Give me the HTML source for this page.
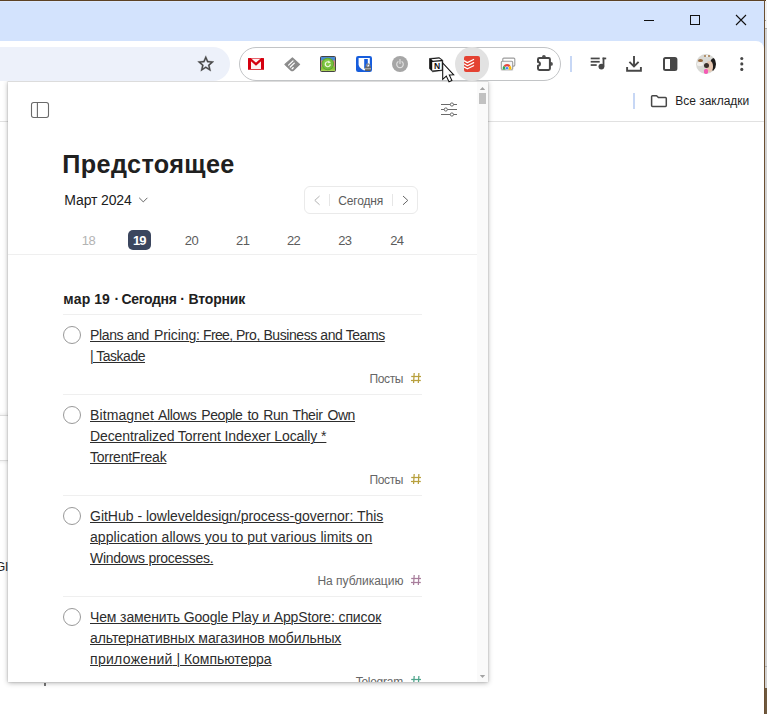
<!DOCTYPE html>
<html lang="ru">
<head>
<meta charset="utf-8">
<title>Предстоящее</title>
<style>
html,body{margin:0;padding:0;}
body{width:767px;height:714px;position:relative;overflow:hidden;background:#fff;font-family:"Liberation Sans",sans-serif;color:#202020;}
.abs{position:absolute;}
.t{position:absolute;white-space:nowrap;line-height:1;}
.u{text-decoration:underline;text-decoration-thickness:1px;text-underline-offset:1px;}
#popup{left:8px;top:81px;width:480px;height:601px;background:#fff;overflow:hidden;}
#shclip{left:0;top:81px;width:764px;height:633px;overflow:hidden;}
#popshadow{left:8px;top:0;width:480px;height:601px;box-shadow:0 1px 5px 0 rgba(0,0,0,.30),0 0 1.5px 0 rgba(0,0,0,.2);}
</style>
</head>
<body>
<div class="abs" style="left:0px;top:0px;width:765px;height:60px;background:#d3e3fd;"></div>
<div class="abs" style="left:0px;top:1px;width:765px;height:1px;background:#dde9fd;"></div>
<div class="abs" style="left:0px;top:41px;width:764px;height:40px;background:#fff;border-top-right-radius:8px;"></div>
<div class="abs" style="left:0px;top:121px;width:764px;height:1px;background:#e1e1e1;"></div>
<div class="abs" style="left:-40px;top:47px;width:270px;height:34px;background:#edf1fa;border-radius:17px;"></div>
<svg class="abs" style="left:196.1px;top:54.2px" width="19.6" height="19.6" viewBox="0 0 24 24"><path fill="#474747" stroke="#474747" stroke-width="0.35" d="M22 9.24l-7.19-.62L12 2 9.19 8.63 2 9.24l5.46 4.73L5.82 21 12 17.27 18.18 21l-1.63-7.03L22 9.24zM12 15.4l-3.76 2.27 1-4.28-3.32-2.88 4.38-.38L12 6.1l1.71 4.04 4.38.38-3.32 2.88 1 4.28L12 15.4z"/></svg>
<div class="abs" style="left:239px;top:47px;width:322px;height:34px;box-sizing:border-box;border:1px solid #c2c4c6;border-radius:17px;"></div>
<div class="abs" style="left:455px;top:47px;width:34px;height:34px;border-radius:50%;background:#e2e2e2;"></div>
<svg class="abs" style="left:248px;top:57.5px" width="16" height="12" viewBox="0 0 16 12"><rect x="0" y="0" width="16" height="12" fill="#fdf1f1"/>
<rect x="0" y="0" width="3" height="12" fill="#d5000f"/><rect x="13" y="0" width="3" height="12" fill="#d5000f"/>
<rect x="0" y="0" width="16" height="0.7" fill="#dd2a35"/>
<polyline points="1.4,0.4 8,6.2 14.6,0.4" fill="none" stroke="#d5000f" stroke-width="2.3" stroke-linejoin="miter"/>
<rect x="0" y="11" width="16" height="1" fill="#de3a44"/></svg>
<svg class="abs" style="left:283.5px;top:56.5px" width="17" height="15" viewBox="0 0 17 15"><path d="M8.4 0.9 L15.6 7.4 L9.4 13.2 Q8.2 14 7 13.2 L0.9 7.4 Z" fill="#8b8b8b" stroke="#8b8b8b" stroke-width="1.2" stroke-linejoin="round"/>
<g stroke="#fff" stroke-width="1.3" stroke-linecap="round"><line x1="4.6" y1="8.1" x2="9" y2="3.9"/><line x1="6.3" y1="10" x2="10.3" y2="6.1"/><line x1="8.1" y1="11.8" x2="9.2" y2="10.7"/></g></svg>
<svg class="abs" style="left:320px;top:56px" width="16" height="16" viewBox="0 0 16 16"><rect x="0.5" y="0.5" width="15" height="15" rx="1" fill="#d48a8a" stroke="#444" stroke-width="1"/>
<rect x="1" y="1" width="14" height="3.4" fill="#4a8bd3"/>
<rect x="1" y="10.6" width="14" height="4.4" fill="#8cc43a"/>
<rect x="1" y="13.6" width="14" height="1.4" fill="#a9d356"/>
<circle cx="7.8" cy="8" r="6.2" fill="#5da42d"/><circle cx="7.7" cy="7.9" r="5.5" fill="#74bd3c"/><circle cx="7.4" cy="7.4" r="3.8" fill="#86ca48"/>
<path d="M10.3 8.4 A2.5 2.5 0 1 1 8.4 5.8" fill="none" stroke="#f2fae8" stroke-width="1.15"/>
<path d="M8.3 4.5 L10.8 6.6 L8.1 7.3 Z" fill="#f2fae8"/></svg>
<svg class="abs" style="left:356px;top:56px" width="16" height="16" viewBox="0 0 16 16"><rect x="0" y="0" width="16" height="16" rx="2.2" fill="#175ddc"/>
<path d="M2.6 2 H13.8 V8.2 C13.8 11.2 10.8 13.4 8.2 14.5 C5.6 13.4 2.6 11.2 2.6 8.2 Z" fill="#fff"/>
<path d="M8.2 3 H11.8 V8.2 C11.8 10.2 10 11.8 8.2 12.8 Z" fill="#175ddc"/>
<path d="M10.4 10.8 V9.6 A1.65 1.65 0 0 1 13.7 9.6 V10.8" fill="none" stroke="#8c8c8c" stroke-width="1.3"/>
<rect x="9.1" y="10.5" width="5.9" height="4.5" rx="0.7" fill="#5e5e5e"/>
<rect x="9.1" y="11.9" width="5.9" height="0.8" fill="#c4c4c4"/>
<rect x="9.1" y="13.5" width="5.9" height="0.5" fill="#9a9a9a"/></svg>
<svg class="abs" style="left:391.8px;top:55.8px" width="16" height="16" viewBox="0 0 16 16"><circle cx="8" cy="8" r="8" fill="#a6a6a6"/>
<path d="M6 5.7 A3.3 3.3 0 1 0 10 5.7" fill="none" stroke="#dedede" stroke-width="1.2" stroke-linecap="round"/>
<line x1="8" y1="3.6" x2="8" y2="7.4" stroke="#dedede" stroke-width="1.2" stroke-linecap="round"/></svg>
<svg class="abs" style="left:429px;top:56.5px" width="15" height="16" viewBox="0 0 15 16"><path d="M0.3 1.5 L10.2 0.6 L13.8 3.2 V13.4 L3.6 14.8 L0.3 11.6 Z" fill="#111" stroke="#111" stroke-width="0.5" stroke-linejoin="round"/>
<path d="M2.3 2.3 L10.2 1.6 L12.3 3 L3.9 3.7 Z" fill="#fff"/>
<path d="M3.2 5 L12.8 4.3 V12.7 L3.2 13.6 Z" fill="#fff"/>
<text x="8" y="11.9" font-family="Liberation Sans, sans-serif" font-weight="bold" font-size="8.6" text-anchor="middle" fill="#111">N</text></svg>
<svg class="abs" style="left:464px;top:56px" width="16" height="16" viewBox="0 0 16 16"><rect x="0" y="0" width="16" height="16" rx="2" fill="#e44232"/>
<g fill="none" stroke="#fff" stroke-width="1.2" stroke-linejoin="round" stroke-linecap="round">
<polyline points="0.3,4.9 3.4,6.6 9.6,3.5"/><polyline points="0.3,8 3.4,9.7 9.6,6.6"/><polyline points="0.3,11.1 3.4,12.8 9.6,9.7"/></g></svg>
<svg class="abs" style="left:500px;top:57px" width="16" height="14" viewBox="0 0 16 14"><rect x="2.8" y="1.1" width="12" height="8" rx="1" fill="#fff" stroke="#9c9c9c" stroke-width="1.1"/>
<rect x="1.3" y="4.2" width="11.4" height="8.4" rx="1" fill="#f6f6f6" stroke="#9c9c9c" stroke-width="1.1"/>
<g transform="translate(7,10.9)"><path d="M-4 2 A4 4 0 0 1 -3.4 -2.1 L0 0 L0 2 Z" fill="#2da94f"/>
<path d="M-3.4 -2.1 A4 4 0 0 1 3.4 -2.1 L0 0 Z" fill="#e8453c"/>
<path d="M3.4 -2.1 A4 4 0 0 1 4 2 L0 2 L0 0 Z" fill="#fbbc05"/>
<circle cx="0" cy="0.3" r="1.7" fill="#4285f4" stroke="#fff" stroke-width="0.6"/></g>
<rect x="0.8" y="12.6" width="12.4" height="0.9" fill="#cfcfcf"/></svg>
<svg class="abs" style="left:536px;top:54px" width="18" height="18" viewBox="0 0 18 18"><circle cx="7.9" cy="2.9" r="1.9" fill="#505050"/><circle cx="15" cy="9.9" r="1.9" fill="#505050"/>
<path d="M3.3 4 H12.6 Q13.9 4 13.9 5.3 V14.6 Q13.9 15.9 12.6 15.9 H3.3 Q2 15.9 2 14.6 V11.8 A1.95 1.95 0 0 0 2 7.9 V5.3 Q2 4 3.3 4 Z" fill="#fff" stroke="#474747" stroke-width="2" stroke-linejoin="round"/></svg>
<div class="abs" style="left:570px;top:56px;width:2px;height:16px;background:#c7d7f5;"></div>
<svg class="abs" style="left:590px;top:57px" width="17" height="13" viewBox="0 0 17 13"><g fill="#474747"><rect x="0.7" y="0.6" width="9" height="1.7"/><rect x="0.7" y="3.9" width="9" height="1.7"/><rect x="0.7" y="7.2" width="6" height="1.7"/>
<rect x="12.6" y="0.6" width="1.8" height="9"/><rect x="12.6" y="0.6" width="3.6" height="1.7"/><circle cx="11.4" cy="9.6" r="2.9"/></g></svg>
<svg class="abs" style="left:625px;top:55px" width="18" height="18" viewBox="0 0 18 18"><g fill="none" stroke="#474747" stroke-width="1.9"><path d="M9 1 V11"/><path d="M4.4 6.8 L9 11.4 L13.6 6.8"/><path d="M2.1 12 V15.7 H15.9 V12"/></g></svg>
<svg class="abs" style="left:662px;top:56px" width="16" height="16" viewBox="0 0 16 16"><rect x="2" y="2" width="12.4" height="12" rx="1.5" fill="none" stroke="#474747" stroke-width="2"/><rect x="8" y="2" width="6.4" height="12" fill="#474747"/></svg>
<div class="abs" style="left:696px;top:54px;width:20px;height:20px;border-radius:50%;overflow:hidden;background:#d9d9d5;">
<div class="abs" style="left:13.5px;top:4px;width:9px;height:13px;border-radius:45%;background:#1d1b1a;"></div>
<div class="abs" style="left:9.5px;top:6.5px;width:7px;height:11px;border-radius:45%;background:#e6c7b1;"></div>
<div class="abs" style="left:7.5px;top:8.5px;width:5px;height:5px;border-radius:50%;background:#3a302b;"></div>
<div class="abs" style="left:1.5px;top:4.5px;width:5px;height:3px;border-radius:50%;background:#9a6a3c;"></div>
<div class="abs" style="left:1px;top:7.5px;width:6px;height:4px;border-radius:40%;background:#f1efec;"></div>
<div class="abs" style="left:7.5px;top:0.5px;width:2.5px;height:2.5px;border-radius:50%;background:#a57a4c;"></div>
<div class="abs" style="left:10px;top:0.5px;width:2px;height:2.5px;border-radius:50%;background:#f6f4f1;"></div>
<div class="abs" style="left:11.5px;top:1px;width:2px;height:2px;border-radius:50%;background:#a57a4c;"></div>
<div class="abs" style="left:7.8px;top:15.2px;width:4.4px;height:4.6px;border-radius:35%;background:#f45bb4;"></div>
</div>
<svg class="abs" style="left:739px;top:56px" width="6" height="16" viewBox="0 0 6 16"><g fill="#474747"><circle cx="2.8" cy="2.5" r="1.55"/><circle cx="2.8" cy="7.9" r="1.55"/><circle cx="2.8" cy="13.4" r="1.55"/></g></svg>
<div class="abs" style="left:644px;top:20px;width:10px;height:1px;background:#111;"></div>
<div class="abs" style="left:690px;top:15px;width:10px;height:10px;box-sizing:border-box;border:1px solid #111;"></div>
<svg class="abs" style="left:735px;top:14px" width="12" height="12" viewBox="0 0 12 12"><path d="M1 1 L11 11 M11 1 L1 11" stroke="#111" stroke-width="1.1" fill="none"/></svg>
<div class="abs" style="left:633px;top:93px;width:2px;height:16px;background:#c7d7f5;"></div>
<svg class="abs" style="left:650px;top:94px" width="18" height="14" viewBox="0 0 18 14"><path d="M1.6 2.6 Q1.6 1.7 2.5 1.7 H6.6 L8.4 3.6 H15.4 Q16.3 3.6 16.3 4.5 V11.6 Q16.3 12.5 15.4 12.5 H2.5 Q1.6 12.5 1.6 11.6 Z" fill="none" stroke="#474747" stroke-width="1.5" stroke-linejoin="round"/></svg>
<div class="t" style="left:675.30px;top:95.04px;font-size:12px;letter-spacing:-0.030px;color:#1f1f1f;">Все закладки</div>
<div class="abs" style="left:-20px;top:416px;width:30px;height:44px;background:#fff;box-shadow:0 0 5px rgba(0,0,0,.16),0 0 0 1px rgba(0,0,0,.07);"></div>
<div class="t" style="left:-4.40px;top:561.42px;font-size:12.5px;color:#222;">Gl</div>
<div class="abs" style="left:44px;top:683px;width:2px;height:3px;background:#777;"></div>

<div id="shclip" class="abs"><div id="popshadow" class="abs"></div></div>
<div id="popup" class="abs">
<div class="abs" style="left:469px;top:0px;width:11px;height:601px;background:#fafafa;"></div>
<div class="abs" style="left:471px;top:12px;width:7px;height:11px;background:#c1c1c1;"></div>
<svg class="abs" style="left:471px;top:5px" width="7" height="5" viewBox="0 0 7 5"><path d="M0.8 4 L3.5 1 L6.2 4 Z" fill="#a3a3a3"/></svg>
<svg class="abs" style="left:471px;top:592.5px" width="7" height="5" viewBox="0 0 7 5"><path d="M0.8 1 L3.5 4 L6.2 1 Z" fill="#a3a3a3"/></svg>
<svg class="abs" style="left:22px;top:20px" width="20" height="18" viewBox="0 0 20 18"><rect x="1.5" y="1.5" width="17" height="15" rx="2.2" fill="none" stroke="#6a6a6a" stroke-width="1.1"/><line x1="7.4" y1="1.5" x2="7.4" y2="16.5" stroke="#6a6a6a" stroke-width="1.1"/></svg>
<svg class="abs" style="left:432px;top:19px" width="18" height="18" viewBox="0 0 18 18"><g stroke="#6a6a6a" stroke-width="1" fill="#fff"><line x1="1" y1="4.5" x2="17" y2="4.5"/><line x1="1" y1="9.5" x2="17" y2="9.5"/><line x1="1" y1="14.5" x2="17" y2="14.5"/>
<circle cx="11.9" cy="4.5" r="1.6"/><circle cx="5.8" cy="9.5" r="1.6"/><circle cx="11.9" cy="14.5" r="1.6"/></g></svg>
<div class="t" style="left:54.30px;top:70.67px;font-size:25.2px;letter-spacing:0.390px;color:#202020;font-weight:bold;">Предстоящее</div>
<div class="t" style="left:56.30px;top:111.55px;font-size:14px;letter-spacing:-0.130px;color:#202020;">Март 2024</div>
<svg class="abs" style="left:130px;top:115px" width="11" height="8" viewBox="0 0 11 8"><polyline points="1.2,1.8 5.3,5.9 9.4,1.8" fill="none" stroke="#666" stroke-width="1"/></svg>
<div class="abs" style="left:296px;top:105px;width:114px;height:28px;box-sizing:border-box;border:1px solid #eaeaea;border-radius:6px;"></div>
<svg class="abs" style="left:305px;top:114px" width="9" height="11" viewBox="0 0 9 11"><polyline points="6.6,1 1.8,5.4 6.6,9.8" fill="none" stroke="#b3b3b3" stroke-width="1"/></svg>
<svg class="abs" style="left:393px;top:114px" width="9" height="11" viewBox="0 0 9 11"><polyline points="2,1 6.8,5.4 2,9.8" fill="none" stroke="#666" stroke-width="1"/></svg>
<div class="abs" style="left:321px;top:113px;width:1px;height:12px;background:#e6e6e6;"></div>
<div class="abs" style="left:384px;top:113px;width:1px;height:12px;background:#e6e6e6;"></div>
<div class="t" style="left:330.30px;top:114.04px;font-size:12px;letter-spacing:-0.170px;color:#5c5c5c;">Сегодня</div>
<div class="abs" style="left:120px;top:149px;width:23px;height:20px;background:#3b465e;border-radius:5px;"></div>
<div class="t" style="left:60.48px;top:152.80px;width:40px;text-align:center;font-size:13px;letter-spacing:-0.55px;color:#b3b3b3;font-weight:normal;">18</div>
<div class="t" style="left:111.30px;top:152.80px;width:40px;text-align:center;font-size:13px;letter-spacing:-1.0px;color:#fff;font-weight:bold;">19</div>
<div class="t" style="left:163.53px;top:152.80px;width:40px;text-align:center;font-size:13px;letter-spacing:-0.55px;color:#5c5c5c;font-weight:normal;">20</div>
<div class="t" style="left:214.72px;top:152.80px;width:40px;text-align:center;font-size:13px;letter-spacing:-0.55px;color:#5c5c5c;font-weight:normal;">21</div>
<div class="t" style="left:265.62px;top:152.80px;width:40px;text-align:center;font-size:13px;letter-spacing:-0.55px;color:#5c5c5c;font-weight:normal;">22</div>
<div class="t" style="left:316.83px;top:152.80px;width:40px;text-align:center;font-size:13px;letter-spacing:-0.55px;color:#5c5c5c;font-weight:normal;">23</div>
<div class="t" style="left:368.83px;top:152.80px;width:40px;text-align:center;font-size:13px;letter-spacing:-0.55px;color:#5c5c5c;font-weight:normal;">24</div>
<div class="abs" style="left:0px;top:173px;width:469px;height:1px;background:#efefef;"></div>
<div class="t" style="left:55.20px;top:210.85px;font-size:14px;letter-spacing:-0.163px;color:#202020;font-weight:bold;"><span style="letter-spacing:0.3px">мар</span> 19<span style="word-spacing:1.1px"> ·</span><span style="word-spacing:-1px;letter-spacing:-0.34px"> Сегодня</span> · Вторник</div>
<div class="abs" style="left:55px;top:233px;width:359px;height:1px;background:#efefef;"></div>
<div class="abs" style="left:55px;top:245.0px;width:18px;height:18px;box-sizing:border-box;border:1px solid #999;border-radius:50%;"></div>
<div class="t u" style="left:82.00px;top:247.45px;font-size:14px;letter-spacing:-0.365px;color:#2d2d2d;">Plans and<span style="word-spacing:1.2px;letter-spacing:-0.1px"> Pricing:</span><span style="letter-spacing:-0.66px"> Free,</span><span style="letter-spacing:-0.42px"> Pro, Business and Teams</span></div>
<div class="t u" style="left:82.00px;top:268.45px;font-size:14px;letter-spacing:-0.490px;color:#2d2d2d;">| Taskade</div>
<div class="t" style="left:361.60px;top:291.94px;font-size:12px;letter-spacing:-0.420px;color:#666;">Посты</div>
<svg class="abs" style="left:402px;top:291px" width="12" height="12" viewBox="0 0 12 12"><g stroke="#b8a03e" stroke-width="1.25" fill="none"><line x1="4.2" y1="1" x2="3.6" y2="11"/><line x1="8.9" y1="1" x2="8.3" y2="11"/><line x1="1.2" y1="4.5" x2="11" y2="4.5"/><line x1="1" y1="8.5" x2="10.8" y2="8.5"/></g></svg>
<div class="abs" style="left:55px;top:313px;width:359px;height:1px;background:#efefef;"></div>
<div class="abs" style="left:55px;top:325.0px;width:18px;height:18px;box-sizing:border-box;border:1px solid #999;border-radius:50%;"></div>
<div class="t u" style="left:82.00px;top:327.45px;font-size:14px;letter-spacing:-0.078px;color:#2d2d2d;"><span style="letter-spacing:0.1px">Bitmagnet</span><span style="letter-spacing:-0.39px;word-spacing:1.46px"> Allows People to Run Their Own</span></div>
<div class="t u" style="left:82.00px;top:348.45px;font-size:14px;letter-spacing:-0.098px;color:#2d2d2d;">Decentralized Torrent Indexer Locally *</div>
<div class="t u" style="left:82.00px;top:369.45px;font-size:14px;letter-spacing:-0.247px;color:#2d2d2d;">TorrentFreak</div>
<div class="t" style="left:361.60px;top:392.94px;font-size:12px;letter-spacing:-0.420px;color:#666;">Посты</div>
<svg class="abs" style="left:402px;top:392px" width="12" height="12" viewBox="0 0 12 12"><g stroke="#b8a03e" stroke-width="1.25" fill="none"><line x1="4.2" y1="1" x2="3.6" y2="11"/><line x1="8.9" y1="1" x2="8.3" y2="11"/><line x1="1.2" y1="4.5" x2="11" y2="4.5"/><line x1="1" y1="8.5" x2="10.8" y2="8.5"/></g></svg>
<div class="abs" style="left:55px;top:414px;width:359px;height:1px;background:#efefef;"></div>
<div class="abs" style="left:55px;top:426.0px;width:18px;height:18px;box-sizing:border-box;border:1px solid #999;border-radius:50%;"></div>
<div class="t u" style="left:82.00px;top:428.45px;font-size:14px;letter-spacing:-0.012px;color:#2d2d2d;">GitHub - lowleveldesign/process-governor: This</div>
<div class="t u" style="left:82.00px;top:449.45px;font-size:14px;letter-spacing:0.062px;color:#2d2d2d;">application allows you to put various limits on</div>
<div class="t u" style="left:82.00px;top:470.45px;font-size:14px;letter-spacing:-0.283px;color:#2d2d2d;">Windows processes.</div>
<div class="t" style="left:309.40px;top:493.94px;font-size:12px;letter-spacing:-0.008px;color:#666;">На публикацию</div>
<svg class="abs" style="left:402px;top:493px" width="12" height="12" viewBox="0 0 12 12"><g stroke="#a87e9c" stroke-width="1.25" fill="none"><line x1="4.2" y1="1" x2="3.6" y2="11"/><line x1="8.9" y1="1" x2="8.3" y2="11"/><line x1="1.2" y1="4.5" x2="11" y2="4.5"/><line x1="1" y1="8.5" x2="10.8" y2="8.5"/></g></svg>
<div class="abs" style="left:55px;top:515px;width:359px;height:1px;background:#efefef;"></div>
<div class="abs" style="left:55px;top:527.0px;width:18px;height:18px;box-sizing:border-box;border:1px solid #999;border-radius:50%;"></div>
<div class="t u" style="left:82.00px;top:529.45px;font-size:14px;letter-spacing:-0.132px;color:#2d2d2d;">Чем заменить Google Play и AppStore: список</div>
<div class="t u" style="left:82.00px;top:550.45px;font-size:14px;letter-spacing:-0.079px;color:#2d2d2d;">альтернативных магазинов мобильных</div>
<div class="t u" style="left:82.00px;top:571.45px;font-size:14px;letter-spacing:0.107px;color:#2d2d2d;"><span style="letter-spacing:0.3px">приложений</span><span style="letter-spacing:-0.04px"> | Компьютерра</span></div>
<div class="t" style="left:347.70px;top:594.94px;font-size:12px;letter-spacing:-0.270px;color:#666;">Telegram</div>
<svg class="abs" style="left:402px;top:594px" width="12" height="12" viewBox="0 0 12 12"><g stroke="#4fa58c" stroke-width="1.25" fill="none"><line x1="4.2" y1="1" x2="3.6" y2="11"/><line x1="8.9" y1="1" x2="8.3" y2="11"/><line x1="1.2" y1="4.5" x2="11" y2="4.5"/><line x1="1" y1="8.5" x2="10.8" y2="8.5"/></g></svg>
<div class="abs" style="left:55px;top:616px;width:359px;height:1px;background:#efefef;"></div>
<div class="abs" style="left:0px;top:0px;width:480px;height:1px;background:#dcdcdc;"></div>

</div>
<svg class="abs" style="left:441px;top:62px" width="14" height="21" viewBox="0 0 14 21"><path d="M1.7 1 L1.7 17.3 L5.3 14 L8.0 19.8 L10.9 18.5 L8.3 13 L12.7 12.8 Z" fill="#fff" stroke="#111" stroke-width="1.05" stroke-linejoin="miter"/></svg>
<div class="abs" style="left:0px;top:0px;width:766px;height:1px;background:#5c4225;"></div>
<div class="abs" style="left:764px;top:0px;width:1px;height:714px;background:#6a4f32;"></div>
<div class="abs" style="left:765px;top:1px;width:2px;height:27px;background:#f1f1f1;"></div>
<div class="abs" style="left:765px;top:28px;width:2px;height:660px;background:#d2d2d2;"></div>
<div class="abs" style="left:765px;top:28px;width:2px;height:1px;background:#aaa;"></div>
<div class="abs" style="left:765px;top:20px;width:1px;height:1px;background:#9a9a9a;"></div>
<div class="abs" style="left:765px;top:666px;width:2px;height:1px;background:#aaa;"></div>
<div class="abs" style="left:765px;top:688px;width:2px;height:26px;background:#6f5a40;"></div>

</body>
</html>
